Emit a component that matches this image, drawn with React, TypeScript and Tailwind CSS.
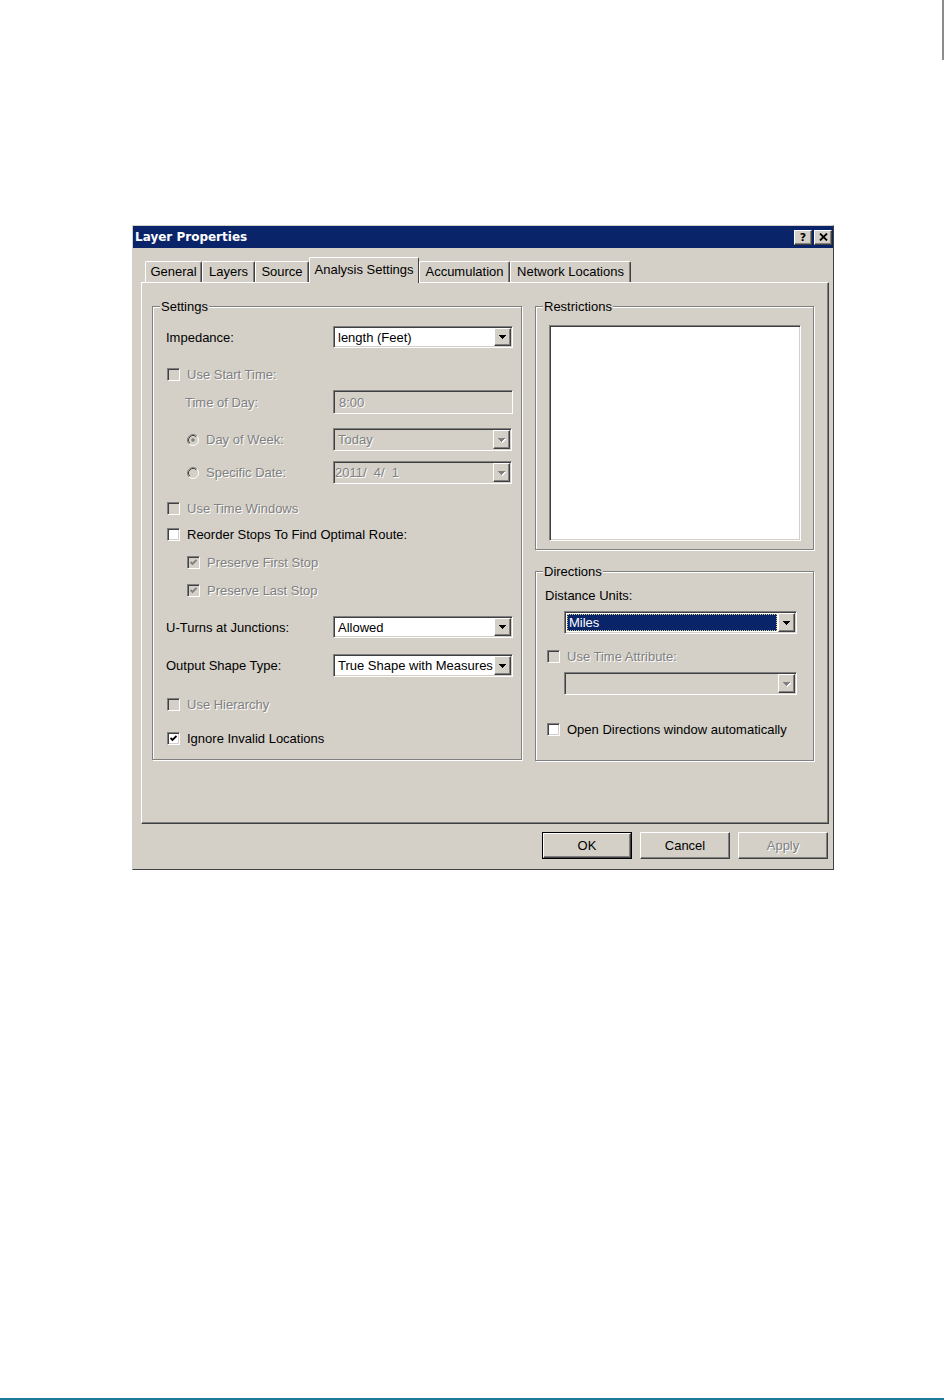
import React from "react";

// classic 3d helpers
const dim = "text-[#808080] [text-shadow:1px_1px_0_#ffffff]";
const raised =
  "border border-t-white border-l-white border-r-[#404040] border-b-[#404040] shadow-[inset_-1px_-1px_0_#808080]";

function CheckBox({ checked = false, disabled = false }: { checked?: boolean; disabled?: boolean }) {
  return (
    <span
      className={`flex h-[13px] w-[13px] shrink-0 items-center justify-center border border-t-[#808080] border-l-[#808080] border-r-white border-b-white shadow-[inset_1px_1px_0_#404040,inset_-1px_-1px_0_#d4d0c8] ${
        disabled ? "bg-[#d4d0c8]" : "bg-white"
      }`}
    >
      {checked && (
        <svg width="7" height="7" viewBox="0 0 7 7">
          <path d="M0.5 3 L2.5 5 L6.5 1" fill="none" stroke={disabled ? "#808080" : "#000"} strokeWidth="1.8" />
        </svg>
      )}
    </span>
  );
}

function Radio({ selected = false }: { selected?: boolean }) {
  return (
    <svg width="12" height="12" viewBox="0 0 12 12" className="shrink-0">
      <circle cx="6" cy="6" r="5" fill="#d4d0c8" />
      <path d="M2.11 9.89 A5.5 5.5 0 0 1 9.89 2.11" fill="none" stroke="#808080" />
      <path d="M9.89 2.11 A5.5 5.5 0 0 1 2.11 9.89" fill="none" stroke="#ffffff" />
      <path d="M2.82 9.18 A4.5 4.5 0 0 1 9.18 2.82" fill="none" stroke="#404040" />
      {selected && <circle cx="6" cy="6" r="1.8" fill="#808080" />}
    </svg>
  );
}

function Sunken({ className = "", children }: { className?: string; children?: React.ReactNode }) {
  return (
    <span
      className={`flex shrink-0 border border-t-[#808080] border-l-[#808080] border-r-white border-b-white p-px shadow-[inset_1px_1px_0_#404040,inset_-1px_-1px_0_#d4d0c8] ${className}`}
    >
      {children}
    </span>
  );
}

// pixel arrow of the drop-down button
function Arrow({ disabled }: { disabled?: boolean }) {
  const d = "M0 0h7v1h-7z M1 1h5v1h-5z M2 2h3v1h-3z M3 3h1v1h-1z";
  return (
    <svg width="8" height="5" viewBox="0 0 8 5" shapeRendering="crispEdges">
      {disabled && <path d={d} fill="#ffffff" transform="translate(1 1)" />}
      <path d={d} fill={disabled ? "#808080" : "#000"} />
    </svg>
  );
}

function Combo({
  value = "",
  className = "",
  disabled = false,
  selected = false,
  textClass = "pl-[3px]",
}: {
  value?: string;
  className?: string;
  disabled?: boolean;
  selected?: boolean;
  textClass?: string;
}) {
  return (
    <Sunken className={className}>
      {selected ? (
        <span className="flex flex-1 bg-white p-px">
          <span className="flex flex-1 items-center border border-dotted border-[#d8cf86] bg-[#0a246a] pl-px text-white">
            {value}
          </span>
        </span>
      ) : (
        <span
          className={`flex flex-1 items-center overflow-hidden whitespace-pre ${textClass} ${
            disabled ? `bg-[#d4d0c8] ${dim}` : "bg-white"
          }`}
        >
          {value}
        </span>
      )}
      <span className={`flex w-[17px] shrink-0 items-center justify-center bg-[#d4d0c8] pl-px pt-px ${raised}`}>
        <Arrow disabled={disabled} />
      </span>
    </Sunken>
  );
}

function Group({
  label,
  className = "",
  children,
}: {
  label: string;
  className?: string;
  children?: React.ReactNode;
}) {
  return (
    <div className={`relative flex shrink-0 flex-col border border-[#808080] shadow-[1px_1px_0_#ffffff,inset_1px_1px_0_#ffffff] ${className}`}>
      <span className="absolute -top-[8px] left-[7px] bg-[#d4d0c8] px-px">{label}</span>
      {children}
    </div>
  );
}

function CheckRow({
  label,
  checked,
  disabled,
  className = "",
}: {
  label: string;
  checked?: boolean;
  disabled?: boolean;
  className?: string;
}) {
  return (
    <div className={`flex h-[20px] items-center gap-[7px] ${className}`}>
      <CheckBox checked={checked} disabled={disabled} />
      <span className={disabled ? dim : ""}>{label}</span>
    </div>
  );
}

function Button({ label, primary, disabled }: { label: string; primary?: boolean; disabled?: boolean }) {
  return (
    <span className={`flex h-[27px] w-[90px] ${primary ? "border border-black" : ""}`}>
      <span className={`flex flex-1 items-center justify-center ${raised} ${disabled ? dim : ""}`}>{label}</span>
    </span>
  );
}

const tabs = [
  { name: "General", w: "w-[57px]" },
  { name: "Layers", w: "w-[53px]" },
  { name: "Source", w: "w-[54px]" },
  { name: "Analysis Settings", w: "w-[110px]", active: true },
  { name: "Accumulation", w: "w-[91px]" },
  { name: "Network Locations", w: "w-[121px]" },
];

export default function App() {
  return (
    <div className="flex h-[1400px] w-[944px] flex-col bg-white font-['Liberation_Sans',Arial,sans-serif] text-[13px] leading-[15px] text-black">
      <div className="flex h-[60px] justify-end">
        <div className="w-[2px] bg-[#8c8c8c]" />
      </div>

      <div className="ml-[132px] mt-[165px] flex h-[645px] w-[702px] flex-col border border-t-[#d4d0c8] border-l-[#d4d0c8] border-r-[#404040] border-b-[#404040] bg-[#d4d0c8]">
        {/* title bar */}
        <div className="flex h-[22px] shrink-0 items-center justify-between bg-[#0a246a] pl-[2px] pr-px">
          <span className="font-['DejaVu_Sans',sans-serif] text-[12px] font-bold text-white">Layer Properties</span>
          <div className="flex gap-[2px]">
            <span className={`flex h-[15px] w-[18px] items-center justify-center bg-[#d4d0c8] font-['DejaVu_Sans',sans-serif] text-[11px] font-bold leading-none ${raised}`}>
              ?
            </span>
            <span className={`flex h-[15px] w-[18px] items-center justify-center bg-[#d4d0c8] ${raised}`}>
              <svg width="9" height="8" viewBox="0 0 9 8">
                <path d="M1 0.5 L8 7.5 M8 0.5 L1 7.5" stroke="#000" strokeWidth="1.8" />
              </svg>
            </span>
          </div>
        </div>

        <div className="ml-[8px] mt-[9px] flex w-[688px] flex-col">
          {/* tabs */}
          <div className="flex h-[25px] items-end pl-[4px]">
            {tabs.map((t) =>
              t.active ? (
                <div
                  key={t.name}
                  className={`relative z-10 -mb-px flex h-[26px] ${t.w} items-center justify-center rounded-t-[2px] border border-b-0 border-t-white border-l-white border-r-[#404040] bg-[#d4d0c8] pb-[3px]`}
                >
                  {t.name}
                </div>
              ) : (
                <div
                  key={t.name}
                  className={`flex h-[21px] ${t.w} items-center justify-center rounded-t-[2px] border border-b-0 border-t-white border-l-white border-r-[#404040] pb-px shadow-[inset_-1px_0_0_#808080]`}
                >
                  {t.name}
                </div>
              )
            )}
          </div>

          {/* tab panel */}
          <div className="flex h-[542px] gap-[13px] border border-t-white border-l-white border-r-[#404040] border-b-[#404040] pl-[10px] pt-[23px] shadow-[inset_-1px_-1px_0_#808080]">
            <Group label="Settings" className="h-[454px] w-[370px] pl-[13px] pt-[19px]">
              <div className="flex h-[22px] items-center">
                <span className="w-[167px]">Impedance:</span>
                <Combo value="length (Feet)" className="h-[22px] w-[180px]" />
              </div>
              <CheckRow label="Use Start Time:" disabled className="mt-[16px] pl-px" />
              <div className="mt-[6px] flex h-[24px] items-center">
                <span className={`w-[167px] pl-[19px] ${dim}`}>Time of Day:</span>
                <Sunken className="h-[24px] w-[180px] items-center bg-[#d4d0c8] pl-[5px]">
                  <span className={dim}>8:00</span>
                </Sunken>
              </div>
              <div className="mt-[14px] flex h-[23px] items-center">
                <span className="flex w-[167px] items-center gap-[7px] pl-[21px]">
                  <Radio selected />
                  <span className={dim}>Day of Week:</span>
                </span>
                <Combo value="Today" disabled className="h-[23px] w-[179px]" />
              </div>
              <div className="mt-[10px] flex h-[23px] items-center">
                <span className="flex w-[167px] items-center gap-[7px] pl-[21px]">
                  <Radio />
                  <span className={dim}>Specific Date:</span>
                </span>
                <Combo value={"2011/  4/  1"} disabled textClass="pl-0" className="h-[23px] w-[179px]" />
              </div>
              <CheckRow label="Use Time Windows" disabled className="mt-[14px] pl-px" />
              <CheckRow label="Reorder Stops To Find Optimal Route:" className="mt-[6px] pl-px" />
              <CheckRow label="Preserve First Stop" checked disabled className="mt-[8px] gap-[6px] pl-[21px]" />
              <CheckRow label="Preserve Last Stop" checked disabled className="mt-[8px] gap-[6px] pl-[21px]" />
              <div className="mt-[16px] flex h-[22px] items-center">
                <span className="w-[167px]">U-Turns at Junctions:</span>
                <Combo value="Allowed" className="h-[22px] w-[180px]" />
              </div>
              <div className="mt-[16px] flex h-[23px] items-center">
                <span className="w-[167px]">Output Shape Type:</span>
                <Combo value="True Shape with Measures" className="h-[23px] w-[180px]" />
              </div>
              <CheckRow label="Use Hierarchy" disabled className="mt-[17px] pl-px" />
              <CheckRow label="Ignore Invalid Locations" checked className="mt-[14px] pl-px" />
            </Group>

            <div className="flex w-[279px] flex-col">
              <Group label="Restrictions" className="h-[244px] pl-[13px] pt-[18px]">
                <Sunken className="h-[216px] w-[252px] bg-white" />
              </Group>
              <Group label="Directions" className="mt-[21px] h-[190px] pl-[9px] pt-[13px]">
                <div className="flex h-[20px] items-center">Distance Units:</div>
                <Combo value="Miles" selected className="ml-[19px] mt-[6px] h-[23px] w-[233px]" />
                <CheckRow label="Use Time Attribute:" disabled className="ml-[2px] mt-[12px]" />
                <Combo disabled className="ml-[19px] mt-[6px] h-[23px] w-[233px]" />
                <CheckRow label="Open Directions window automatically" className="ml-[2px] mt-[24px]" />
              </Group>
            </div>
          </div>
        </div>

        {/* dialog buttons */}
        <div className="mt-[8px] flex justify-end gap-[8px] pr-[5px]">
          <Button label="OK" primary />
          <Button label="Cancel" />
          <Button label="Apply" disabled />
        </div>
      </div>

      <div className="flex-1" />
      <div className="h-[2px] bg-[#1e7a99]" />
    </div>
  );
}
